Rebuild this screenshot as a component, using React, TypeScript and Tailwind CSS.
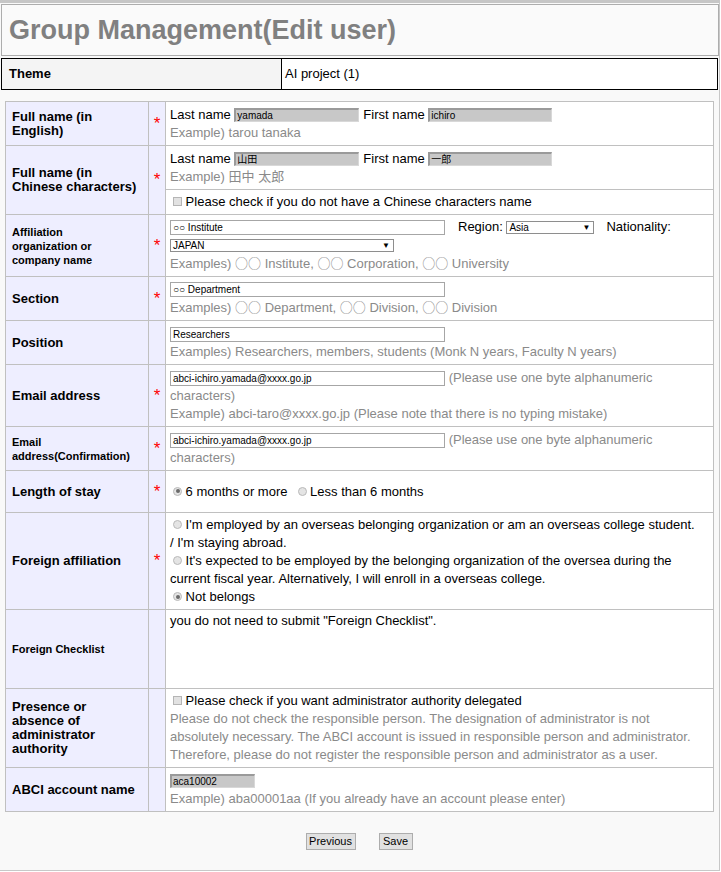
import React from 'react';

const base = "font-['Liberation_Sans',Arial,'Noto_Sans_CJK_JP',sans-serif]";

function Star() {
  return <span className="text-[#ff0000] text-[17px] leading-none">*</span>;
}

function Maru() {
  return <span className="font-['Noto_Sans_CJK_JP',sans-serif] text-[13px]">○○</span>;
}

function GrayInput({ value, w }: { value: string; w: string }) {
  return (
    <span
      className={`inline-block align-middle ${w} h-[14px] bg-[#c8c8c8] border-t-2 border-l-2 border-t-[#9a9a9a] border-l-[#9a9a9a] border-b border-r border-b-[#d8d8d8] border-r-[#d8d8d8] text-[10px] leading-[11px] text-black pl-[1px] overflow-hidden whitespace-nowrap`}
    >
      {value}
    </span>
  );
}

function TextInput({ value }: { value: string }) {
  return (
    <span className="inline-block align-middle w-[275px] h-[15px] bg-white border border-[#a6a6a6] text-[10px] leading-[13px] text-black pl-[2px] overflow-hidden whitespace-nowrap">
      {value}
    </span>
  );
}

function Select({ value, w }: { value: string; w: string }) {
  return (
    <span
      className={`inline-flex align-middle ${w} h-[13px] bg-white border border-[#8e8e8e] text-[10px] leading-[11px] text-black pl-[2px] pr-[3px] items-center justify-between whitespace-nowrap`}
    >
      <span>{value}</span>
      <span className="text-[8px] leading-none">▼</span>
    </span>
  );
}

function Radio({ checked }: { checked?: boolean }) {
  return (
    <span className="inline-flex align-middle w-[9px] h-[9px] rounded-full border border-[#b9b9b9] bg-[#e4e4e4] items-center justify-center relative top-[-1px]">
      {checked && <span className="w-[4px] h-[4px] rounded-full bg-[#6a6a6a]" />}
    </span>
  );
}

function Check() {
  return <span className="inline-block align-middle w-[9px] h-[9px] border border-[#b5b5b5] bg-[#e2e2e2] relative top-[-1px]" />;
}

function Label({ children, small, rowSpan }: { children: React.ReactNode; small?: boolean; rowSpan?: number }) {
  return (
    <td
      rowSpan={rowSpan}
      className={`bg-[#eeeeff] border border-[#c0c0c0] pl-[6px] pr-[4px] font-bold text-black ${small ? 'text-[11px]' : 'text-[13px]'} leading-[14px]`}
    >
      {children}
    </td>
  );
}

function StarCell({ req, rowSpan }: { req?: boolean; rowSpan?: number }) {
  return (
    <td rowSpan={rowSpan} className="bg-[#eeeeff] border border-[#c0c0c0] text-center">
      {req && <Star />}
    </td>
  );
}

function Value({ children, top }: { children: React.ReactNode; top?: boolean }) {
  return (
    <td className={`bg-white border border-[#c0c0c0] pl-[4px] pr-[2px] text-[13px] leading-[18px] text-black ${top ? 'align-top pt-[2px]' : ''}`}>
      {children}
    </td>
  );
}

const ex = 'text-[#8a8a8a]';

export default function App() {
  return (
    <div className={`${base} w-[720px] bg-[#f9f9f9] border-t-[3px] border-t-[#c6c6c6] border-r border-b border-r-[#c8c8c8] border-b-[#c8c8c8] pl-[1px] pt-[1px]`}>
      <div className="w-[718px] h-[52px] bg-[#fafafa] border border-[#adadad] flex items-center pl-[7px]">
        <h1 className="text-[27px] font-bold text-[#808080] leading-none">Group Management(Edit user)</h1>
      </div>

      <div className="mt-[2px] w-[717px] h-[32px] border border-black flex text-[13px] text-black">
        <div className="w-[280px] bg-[#f4f4f4] border-r border-black flex items-center pl-[7px] font-bold">Theme</div>
        <div className="flex-1 bg-white flex items-center pl-[3px]">AI project (1)</div>
      </div>

      <table className="mt-[11px] ml-[4px] w-[709px] table-fixed border-collapse">
        <colgroup>
          <col className="w-[143px]" />
          <col className="w-[17px]" />
          <col />
        </colgroup>
        <tbody>
          <tr className="h-[44px]">
            <Label>Full name (in<br />English)</Label>
            <StarCell req />
            <Value>
              <div className="whitespace-nowrap">
                Last name <GrayInput value="yamada" w="w-[125px]" />
                <span className="ml-[4px]">First name</span> <GrayInput value="ichiro" w="w-[124px]" />
              </div>
              <div className={ex}>Example) tarou tanaka</div>
            </Value>
          </tr>
          <tr className="h-[44px]">
            <Label rowSpan={2}>Full name (in<br />Chinese characters)</Label>
            <StarCell req rowSpan={2} />
            <Value>
              <div className="whitespace-nowrap">
                Last name <GrayInput value="山田" w="w-[125px]" />
                <span className="ml-[4px]">First name</span> <GrayInput value="一郎" w="w-[124px]" />
              </div>
              <div className={ex}>Example) 田中 太郎</div>
            </Value>
          </tr>
          <tr className="h-[25px]">
            <Value>
              <span className="ml-[3px]"><Check /></span> Please check if you do not have a Chinese characters name
            </Value>
          </tr>
          <tr className="h-[62px]">
            <Label small>Affiliation<br />organization or<br />company name</Label>
            <StarCell req />
            <Value>
              <div className="whitespace-nowrap">
                <TextInput value="○○ Institute" />
                <span className="ml-[13px]">Region:</span> <Select value="Asia" w="w-[88px]" />
                <span className="ml-[12px]">Nationality:</span>
              </div>
              <div>
                <Select value="JAPAN" w="w-[224px]" />
              </div>
              <div className={ex}>Examples) <Maru /> Institute, <Maru /> Corporation, <Maru /> University</div>
            </Value>
          </tr>
          <tr className="h-[44px]">
            <Label>Section</Label>
            <StarCell req />
            <Value>
              <div>
                <TextInput value="○○ Department" />
              </div>
              <div className={ex}>Examples) <Maru /> Department, <Maru /> Division, <Maru /> Division</div>
            </Value>
          </tr>
          <tr className="h-[44px]">
            <Label>Position</Label>
            <StarCell />
            <Value>
              <div>
                <TextInput value="Researchers" />
              </div>
              <div className={ex}>Examples) Researchers, members, students (Monk N years, Faculty N years)</div>
            </Value>
          </tr>
          <tr className="h-[62px]">
            <Label>Email address</Label>
            <StarCell req />
            <Value>
              <div className="whitespace-nowrap">
                <TextInput value="abci-ichiro.yamada@xxxx.go.jp" />{' '}
                <span className={ex}>(Please use one byte alphanumeric</span>
              </div>
              <div className={ex}>characters)</div>
              <div className={ex}>Example) abci-taro@xxxx.go.jp (Please note that there is no typing mistake)</div>
            </Value>
          </tr>
          <tr className="h-[44px]">
            <Label small>Email<br />address(Confirmation)</Label>
            <StarCell req />
            <Value>
              <div className="whitespace-nowrap">
                <TextInput value="abci-ichiro.yamada@xxxx.go.jp" />{' '}
                <span className={ex}>(Please use one byte alphanumeric</span>
              </div>
              <div className={ex}>characters)</div>
            </Value>
          </tr>
          <tr className="h-[42px]">
            <Label>Length of stay</Label>
            <StarCell req />
            <Value>
              <div className="whitespace-nowrap">
                <span className="ml-[3px]"><Radio checked /></span> 6 months or more
                <span className="ml-[10px]"><Radio /></span> Less than 6 months
              </div>
            </Value>
          </tr>
          <tr className="h-[97px]">
            <Label>Foreign affiliation</Label>
            <StarCell req />
            <Value>
              <div className="whitespace-nowrap">
                <span className="ml-[3px]"><Radio /></span> I'm employed by an overseas belonging organization or am an overseas college student.
              </div>
              <div>/ I'm staying abroad.</div>
              <div className="whitespace-nowrap">
                <span className="ml-[3px]"><Radio /></span> It's expected to be employed by the belonging organization of the oversea during the
              </div>
              <div>current fiscal year. Alternatively, I will enroll in a overseas college.</div>
              <div>
                <span className="ml-[3px]"><Radio checked /></span> Not belongs
              </div>
            </Value>
          </tr>
          <tr className="h-[79px]">
            <Label small>Foreign Checklist</Label>
            <StarCell />
            <Value top>you do not need to submit "Foreign Checklist".</Value>
          </tr>
          <tr className="h-[79px]">
            <Label>Presence or<br />absence of<br />administrator<br />authority</Label>
            <StarCell />
            <Value>
              <div>
                <span className="ml-[3px]"><Check /></span> Please check if you want administrator authority delegated
              </div>
              <div className={`${ex} whitespace-nowrap`}>Please do not check the responsible person. The designation of administrator is not</div>
              <div className={`${ex} whitespace-nowrap`}>absolutely necessary. The ABCI account is issued in responsible person and administrator.</div>
              <div className={`${ex} whitespace-nowrap`}>Therefore, please do not register the responsible person and administrator as a user.</div>
            </Value>
          </tr>
          <tr className="h-[44px]">
            <Label>ABCI account name</Label>
            <StarCell />
            <Value>
              <div>
                <GrayInput value="aca10002" w="w-[85px]" />
              </div>
              <div className={ex}>Example) aba00001aa (If you already have an account please enter)</div>
            </Value>
          </tr>
        </tbody>
      </table>

      <div className="flex justify-center gap-[23px] pt-[21px] pb-[20px] pr-[2px]">
        <button className="w-[50px] h-[17px] bg-[#e1e1e1] border border-[#adadad] text-[11px] leading-none text-black">Previous</button>
        <button className="w-[34px] h-[17px] bg-[#e1e1e1] border border-[#adadad] text-[11px] leading-none text-black">Save</button>
      </div>
    </div>
  );
}
